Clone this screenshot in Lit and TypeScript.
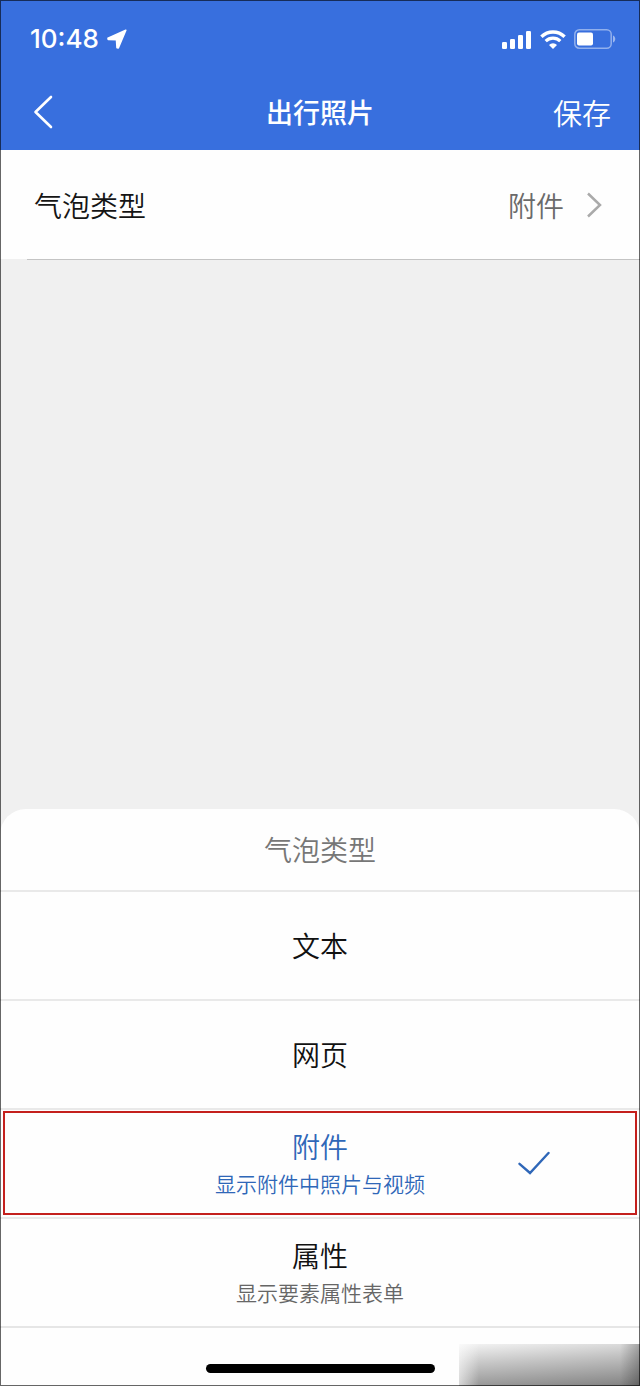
import { LitElement, html, css, nothing } from "lit";
import { customElement, state } from "lit/decorators.js";

interface BubbleType {
  name: string;
  note?: string;
}

const TYPES: BubbleType[] = [
  { name: "文本" },
  { name: "网页" },
  { name: "附件", note: "显示附件中照片与视频" },
  { name: "属性", note: "显示要素属性表单" },
];

@customElement("status-bar")
class StatusBar extends LitElement {
  static styles = css`
    :host {
      display: flex;
      justify-content: space-between;
      align-items: center;
      height: 78px;
      padding: 0 24px 0 30px;
      box-sizing: border-box;
      color: #fff;
    }
    .group {
      display: flex;
      align-items: center;
      gap: 8px;
    }
    .time {
      font: 500 26px/32px Inter, sans-serif;
    }
    svg {
      display: block;
    }
  `;

  render() {
    return html`
      <div class="group">
        <span class="time">10:48</span>
        <svg width="20" height="20" viewBox="0 0 20 20" fill="#fff" stroke="#fff" stroke-width="1.600" stroke-linejoin="round" aria-hidden="true">
          <path d="M18.800 1.200 1 9.200 1.200 10.500 9.500 10.800 10 18.800 11.300 18.900z" />
        </svg>
      </div>
      <div class="group">
        <svg width="30" height="19" viewBox="0 0 30 19" fill="#fff" aria-hidden="true">
          <rect x="0" y="12" width="5" height="7" rx="1.300" />
          <rect x="8" y="9" width="5" height="10" rx="1.300" />
          <rect x="16" y="5" width="5" height="14" rx="1.300" />
          <rect x="24" y="1" width="5" height="18" rx="1.300" />
        </svg>
        <svg width="26" height="19" viewBox="0 0 26 19" fill="none" stroke="#fff" aria-hidden="true">
          <path d="M1.400 6.700a16.500 16.500 0 0 1 23.200 0" stroke-width="3.400" />
          <path d="M5.700 11.200a10.400 10.400 0 0 1 14.600 0" stroke-width="3.200" />
          <path d="M13 19l-4-4.100a5.700 5.700 0 0 1 8 0z" fill="#fff" stroke="none" />
        </svg>
        <svg width="42" height="20" viewBox="0 0 42 20" aria-hidden="true">
          <rect x=".8" y=".8" width="36.400" height="18.400" rx="4.500" fill="none" stroke="#fff" stroke-opacity=".45" stroke-width="1.500" />
          <rect x="3" y="3.500" width="16" height="13" rx="2" fill="#fff" />
          <path d="M39 6.500c3 1.200 3 5.800 0 7z" fill="#fff" fill-opacity=".5" />
        </svg>
      </div>
    `;
  }
}

@customElement("type-sheet")
class TypeSheet extends LitElement {
  @state() private selected = "附件";

  static styles = css`
    :host {
      display: block;
      background: #fefefe;
      border-radius: 26px 26px 0 0;
    }
    .title {
      margin: 0;
      padding: 20px 0 21px;
      text-align: center;
      font-size: 28px;
      line-height: 40px;
      font-weight: 350;
      color: #777;
    }
    .list {
      list-style: none;
      margin: 0;
      padding: 0;
      border-bottom: 2px solid #e6e6e6;
    }
    .item {
      display: grid;
      height: 109px;
      padding: 1px 3px 2px;
      box-sizing: border-box;
      border-top: 2px solid #e9e9e9;
    }
    .option {
      display: grid;
      grid-template-columns: 1fr auto 1fr;
      align-items: center;
      border: 2px solid transparent;
      background: none;
      padding: 0;
      font: inherit;
      color: #111;
      cursor: pointer;
    }
    .option.on {
      border-color: #c4201d;
      color: #2f67b8;
    }
    .label {
      grid-column: 2;
      display: flex;
      flex-direction: column;
      align-items: center;
    }
    .name {
      font-size: 28px;
      line-height: 40px;
    }
    .note {
      font-size: 21px;
      line-height: 34px;
      color: #666;
    }
    .on .note {
      color: inherit;
    }
    .check {
      justify-self: center;
      margin-left: 8px;
    }
  `;

  render() {
    return html`
      <h2 class="title">气泡类型</h2>
      <ul class="list">
        ${TYPES.map((type) => {
          const on = type.name === this.selected;
          return html`
            <li class="item">
              <button
                class="option ${on ? "on" : ""}"
                aria-pressed=${on ? "true" : "false"}
                @click=${() => (this.selected = type.name)}
              >
                <span class="label">
                  <span class="name">${type.name}</span>
                  ${type.note ? html`<span class="note">${type.note}</span>` : nothing}
                </span>
                ${on
                  ? html`<svg class="check" width="32" height="24" viewBox="0 0 32 24" fill="none" stroke="#2f67b8" stroke-width="2.400" stroke-linecap="round" aria-hidden="true">
                      <path d="M1.500 12.800 12 22 30.500 2" />
                    </svg>`
                  : nothing}
              </button>
            </li>
          `;
        })}
      </ul>
    `;
  }
}

@customElement("app-root")
class AppRoot extends LitElement {
  static styles = css`
    :host {
      position: relative;
      display: flex;
      flex-direction: column;
      min-height: 100vh;
      background: #f0f0f0;
      font-family: "Noto Sans CJK SC", sans-serif;
      font-weight: 350;
    }
    :host::after {
      content: "";
      position: absolute;
      inset: 0;
      border: 1px solid rgba(0, 0, 0, 0.6);
      pointer-events: none;
    }
    .top {
      background: #386fde;
      color: #fff;
    }
    .nav {
      display: grid;
      grid-template-columns: 1fr auto 1fr;
      align-items: center;
      height: 72px;
      padding: 0 29px 4px;
      box-sizing: border-box;
    }
    button {
      border: 0;
      padding: 0;
      background: none;
      font: inherit;
      color: inherit;
      cursor: pointer;
    }
    svg {
      display: block;
    }
    .back {
      justify-self: start;
      padding-left: 4px;
    }
    .heading {
      margin: 0;
      font-size: 27px;
      line-height: 40px;
      font-weight: 500;
    }
    .save {
      justify-self: end;
      font-size: 29px;
      line-height: 40px;
    }
    .setting {
      display: flex;
      align-items: center;
      height: 109px;
      padding: 0 38px 0 34px;
      background: #fefefe;
      font-size: 28px;
      line-height: 40px;
      color: #151515;
    }
    .value {
      margin-left: auto;
      margin-right: 22px;
      color: #6a6a6a;
    }
    .rule {
      height: 1px;
      margin-left: 27px;
      background: #c4c4c4;
    }
    .space {
      flex: 1;
    }
    .foot {
      position: relative;
      height: 58px;
      background: #fefefe;
      display: flex;
      justify-content: center;
      align-items: center;
      padding-top: 22px;
      box-sizing: border-box;
    }
    .home {
      width: 229px;
      height: 9px;
      border-radius: 5px;
      background: #000;
    }
    .shade {
      position: absolute;
      right: 0;
      bottom: 0;
      width: 181px;
      height: 42px;
      background: linear-gradient(to right, rgba(254, 254, 254, 0.6), rgba(254, 254, 254, 0) 20px),
        linear-gradient(to left, rgba(0, 0, 0, 0.25), rgba(0, 0, 0, 0) 20px),
        linear-gradient(176deg, #f4f4f4, #c4c4c4 40%, #808080);
    }
  `;

  render() {
    return html`
      <header class="top">
        <status-bar></status-bar>
        <nav class="nav">
          <button class="back" aria-label="返回">
            <svg width="20" height="34" viewBox="0 0 20 34" fill="none" stroke="#fff" stroke-width="2.600" stroke-linecap="round" stroke-linejoin="round">
              <path d="M18 2 2.500 17 18 32" />
            </svg>
          </button>
          <h1 class="heading">出行照片</h1>
          <button class="save">保存</button>
        </nav>
      </header>
      <button class="setting">
        <span>气泡类型</span>
        <span class="value">附件</span>
        <svg width="16" height="26" viewBox="0 0 16 26" fill="none" stroke="#aaa" stroke-width="2.500" aria-hidden="true">
          <path d="M2 1.500 14 13 2 24.500" />
        </svg>
      </button>
      <div class="rule"></div>
      <div class="space"></div>
      <type-sheet></type-sheet>
      <footer class="foot">
        <div class="home"></div>
        <div class="shade"></div>
      </footer>
    `;
  }
}
